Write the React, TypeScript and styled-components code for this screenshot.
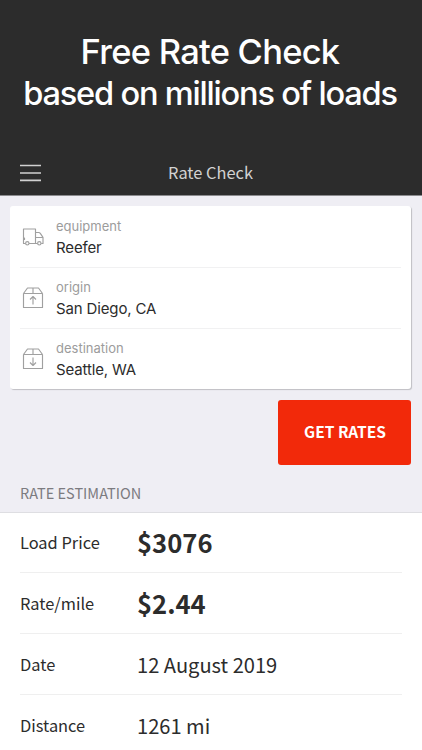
import React from 'react';
import styled, { createGlobalStyle } from 'styled-components';

const GlobalStyle = createGlobalStyle`
  *, *::before, *::after { box-sizing: border-box; }
  body { margin: 0; background: #fff; overflow: hidden; }
`;

const sans = `'Noto Sans CJK SC', 'Noto Sans', sans-serif`;
const system = `Inter, 'Liberation Sans', sans-serif`;

const Screen = styled.main`
  display: flex;
  flex-direction: column;
  width: 422px;
  height: 750px;
  overflow: hidden;
  background: #efeef4;
  color: #2c2c2c;
  font-family: ${sans};
`;

const Hero = styled.header`
  flex: none;
  height: 150px;
  padding: 31px 2px 0 0;
  background: #2c2c2c;
  color: #fff;
  font-family: ${system};
  font-weight: 500;
  text-align: center;
  white-space: nowrap;
`;

const HeroLine = styled.div<{ $size: number; $tracking: number }>`
  height: 41px;
  line-height: 42px;
  font-size: ${(p) => p.$size}px;
  letter-spacing: ${(p) => p.$tracking}px;
`;

const NavBar = styled.nav`
  flex: none;
  display: grid;
  grid-template-columns: 1fr auto 1fr;
  align-items: center;
  height: 46px;
  padding: 0 21px 0 20px;
  background: #2c2c2c;
  border-bottom: 1px solid #8b8b8e;
`;

const MenuButton = styled.button`
  display: flex;
  width: 21px;
  height: 18px;
  padding: 0;
  border: 0;
  background: none;
`;

const MenuGlyph = styled.svg`
  width: 21px;
  height: 18px;
  stroke: #d0d0d0;
  stroke-width: 1.6;
`;

const NavTitle = styled.h1`
  margin: 0 0 2px;
  color: #d2d2d2;
  font-size: 16.4px;
  font-weight: 400;
  line-height: 24px;
`;

const Card = styled.section`
  flex: none;
  margin: 10px 11px 0 10px;
  padding: 0 10px;
  height: 183px;
  border-radius: 3px;
  background: #fff;
  box-shadow: 1px 1px 1px rgba(0, 0, 0, 0.2);
`;

const Field = styled.div`
  display: flex;
  align-items: center;
  height: 61.2px;
  & + & { border-top: 1px solid #f1f1f2; }
`;

const FieldIcon = styled.svg`
  flex: none;
  width: 22px;
  height: 24px;
  margin: 0 12px 0 2px;
  fill: none;
  stroke: #a0a0a0;
  stroke-width: 1.15;
  stroke-linejoin: round;
`;

const FieldText = styled.div`
  padding-top: 1px;
  font-family: ${system};
  white-space: nowrap;
`;

const FieldLabel = styled.div`
  color: #9c9c9c;
  font-size: 13px;
  line-height: 20px;
`;

const FieldValue = styled.div`
  font-size: 15px;
  letter-spacing: -0.14px;
  line-height: 23px;
`;

const Actions = styled.div`
  flex: none;
  display: flex;
  justify-content: flex-end;
  margin: 11px 11px 0 0;
`;

const RatesButton = styled.button`
  width: 133px;
  height: 65px;
  padding: 0 0 3px 1px;
  border: 0;
  border-radius: 3px;
  background: #f2290a;
  color: #fff;
  font-family: ${sans};
  font-size: 15.5px;
  font-weight: 700;
`;

const SectionTitle = styled.h2`
  flex: none;
  margin: 0;
  height: 48px;
  padding: 16px 20px 0;
  border-bottom: 1px solid #dedee2;
  color: #7c7b80;
  font-size: 14.5px;
  font-weight: 400;
  line-height: 24px;
`;

const Estimates = styled.dl`
  flex: 1;
  margin: 0;
  padding: 0 20px;
  background: #fff;
`;

const Estimate = styled.div`
  display: flex;
  align-items: center;
  height: 61.2px;
  padding-bottom: 1px;
  &:first-child { height: 59px; }
  & + & { border-top: 1px solid #efefef; }
`;

const Term = styled.dt`
  width: 117px;
  font-size: 16.4px;
  line-height: 24px;
`;

const Amount = styled.dd<{ $strong?: boolean }>`
  margin: 0;
  padding-top: ${(p) => (p.$strong ? 0 : 3)}px;
  font-size: ${(p) => (p.$strong ? 25.6 : 20.1)}px;
  font-weight: ${(p) => (p.$strong ? 700 : 400)};
  line-height: 30px;
  white-space: nowrap;
`;

const TruckIcon = () => (
  <FieldIcon viewBox="0 0 22 24">
    <path d="M3.4 18.5H1.5V4h12v14.5H7M13.5 7.5h3.2q1 0 1.6.9l2.7 4v6.1h-1.8M13.5 12.5H21M13.5 18.5h2M1.5 13h1v2" />
    <circle cx="5.3" cy="18.3" r="1.7" />
    <circle cx="17.3" cy="18.3" r="1.7" />
  </FieldIcon>
);

const BoxIcon = ({ down }: { down?: boolean }) => (
  <FieldIcon viewBox="0 0 22 24">
    <path d="M1.5 7.5h19v14h-19zM1.5 7.5l4-5.5h11l4 5.5M11 2v5.5" />
    <path d={down ? 'M11 10.5v8M8 15.5l3 3 3-3' : 'M11 18.5v-8M8 13.5l3-3 3 3'} />
  </FieldIcon>
);

const fields = [
  { label: 'equipment', value: 'Reefer', icon: <TruckIcon /> },
  { label: 'origin', value: 'San Diego, CA', icon: <BoxIcon /> },
  { label: 'destination', value: 'Seattle, WA', icon: <BoxIcon down /> },
];

const estimates = [
  { term: 'Load Price', amount: '$3076', strong: true },
  { term: 'Rate/mile', amount: '$2.44', strong: true },
  { term: 'Date', amount: '12 August 2019' },
  { term: 'Distance', amount: '1261 mi' },
];

export default function App() {
  return (
    <Screen>
      <GlobalStyle />
      <Hero>
        <HeroLine $size={34.5} $tracking={-0.75}>Free Rate Check</HeroLine>
        <HeroLine $size={32.6} $tracking={-1.2}>based on millions of loads</HeroLine>
      </Hero>
      <NavBar>
        <MenuButton aria-label="Menu">
          <MenuGlyph viewBox="0 0 21 18">
            <path d="M0 1.5h21M0 9h21M0 16.4h21" />
          </MenuGlyph>
        </MenuButton>
        <NavTitle>Rate Check</NavTitle>
      </NavBar>
      <Card>
        {fields.map((f) => (
          <Field key={f.label}>
            {f.icon}
            <FieldText>
              <FieldLabel>{f.label}</FieldLabel>
              <FieldValue>{f.value}</FieldValue>
            </FieldText>
          </Field>
        ))}
      </Card>
      <Actions>
        <RatesButton>GET RATES</RatesButton>
      </Actions>
      <SectionTitle>RATE ESTIMATION</SectionTitle>
      <Estimates>
        {estimates.map((e) => (
          <Estimate key={e.term}>
            <Term>{e.term}</Term>
            <Amount $strong={e.strong}>{e.amount}</Amount>
          </Estimate>
        ))}
      </Estimates>
    </Screen>
  );
}
